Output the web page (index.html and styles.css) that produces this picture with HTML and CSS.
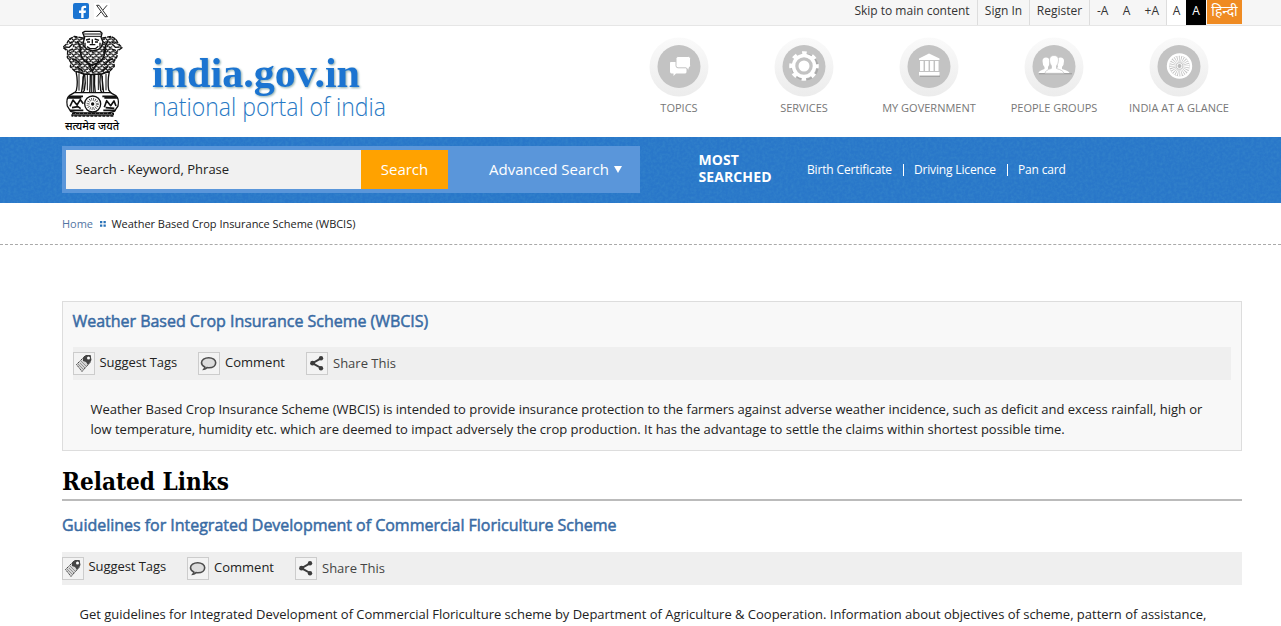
FILE: index.html
```html
<!DOCTYPE html>
<html lang="en">
<head>
<meta charset="utf-8">
<title>Weather Based Crop Insurance Scheme (WBCIS) | National Portal of India</title>
<link rel="stylesheet" href="styles.css">
</head>
<body>
<svg class="defs" width="0" height="0">
  <defs>
    <linearGradient id="ring" x1="0" y1="0" x2="0" y2="1"><stop offset="0" stop-color="#fafafa"/><stop offset="1" stop-color="#ececec"/></linearGradient>
    <pattern id="fur" width="17" height="15" patternUnits="userSpaceOnUse"><path d="M0 2q6 9 9 1M8 10q5 8 8 0M1 13l4-4M12 5l4-4M3 8l3 3M11 1v4" fill="none" stroke="#111" stroke-width="3.500"/></pattern>
    <filter id="grain" x="0" y="0" width="100%" height="100%"><feTurbulence type="fractalNoise" baseFrequency=".35" numOctaves="2" seed="4"/><feColorMatrix values="0 0 0 0 .04  0 0 0 0 .25  0 0 0 0 .6  1.800 0 0 0 -.6"/></filter>
    <symbol id="tag" viewBox="1 1 20 21"><path d="M3.500 12.500 12 4h5.500v6L9 19.500z" fill="#d5d5d5" stroke="#444" stroke-dasharray="1.500 .6"/><path d="M10 5.500 13 3h4.500l1 5-3.500 5-2-3-3-1z" fill="#444"/><path d="M5 12l6 6M7 11l5 5M8 9l6 6" stroke="#777" stroke-width=".7"/><circle cx="15.500" cy="6" r="1.500" fill="#fff"/></symbol>
    <symbol id="bubble" viewBox="1 1 20 21"><path d="M10.700 5.700c4 0 7 2.300 7 5.100s-2.700 5-6.700 5q-1 0-2-.2-1.400 1.300-3 1.500.8-1 .8-2.200C4.800 14 3.500 12.500 3.500 10.800c0-2.800 3.200-5.100 7.200-5.100z" fill="#ddd" stroke="#4d4d4d" stroke-width="1.600"/></symbol>
    <symbol id="share" viewBox="1 1 20 21"><path d="M15 6.300 6.500 11.200 15 16" fill="none" stroke="#3c3c3c" stroke-width="2"/><circle cx="15" cy="6.200" r="2.200" fill="#3c3c3c"/><circle cx="6.500" cy="11.200" r="2.400" fill="#3c3c3c"/><circle cx="15" cy="16.200" r="2.200" fill="#3c3c3c"/></symbol>
  </defs>
</svg>

<div class="topbar"><div class="wrap topbar-in">
  <div class="social">
    <svg width="16" height="16" viewBox="0 0 16 16"><rect width="16" height="16" rx="2" fill="#1b74d1"/><path d="M8.200 15V10H6V7.600h2.200V6c0-2.200 1.300-3.300 3.200-3.300h1.700v2.200h-1.300c-.8 0-1.200.4-1.200 1.200v1.500H13l-.4 2.400h-2v5z" fill="#fff"/></svg>
    <svg class="x" width="16" height="16" viewBox="0 0 16 16"><rect width="16" height="16" fill="#fff"/><path d="M2.600 2.300h2.500l8.300 11.400h-2.500zM13 2.300 8.900 7.100M7 8.900 2.700 13.700" fill="none" stroke="#333"/></svg>
  </div>
  <div class="tools">
    <a class="skip">Skip to main content</a><a class="signin">Sign In</a><a class="register">Register</a>
    <a class="sizes"><span>-A</span><span>A</span><span>+A</span></a><a class="light">A</a><a class="dark">A</a><a class="hindi">हिन्दी</a>
  </div>
</div></div>

<header class="wrap header">
  <svg class="emblem" width="75" height="106" viewBox="0 0 225 318">
    <g stroke="#111" stroke-width="4" stroke-linejoin="round">
      <path id="mane" d="M82 30 58 25 42 34 35 48 24 58 38 70 37 88 48 104 46 116 62 132 90 140 138 140 162 132 178 115 176 102 186 86 186 70 201 59 190 47 183 34 168 25 143 30z" fill="#fff" stroke-dasharray="12 3"/>
      <path d="M82 30 58 25 42 34 35 48 24 58 38 70 37 88 48 104 46 116 62 132 90 140 138 140 162 132 178 115 176 102 186 86 186 70 201 59 190 47 183 34 168 25 143 30z" fill="url(#fur)" stroke="none"/>
      <path d="M78 62q-6 22 12 38l22 12 24-12q18-16 10-38M66 40q14 12 8 34M160 40q-14 12-8 34M52 92q16 4 26 20M174 92q-16 4-26 20M94 96l18 34 20-34M66 116l18 14M158 116l-16 14" fill="none" stroke-width="4.500"/>
      <path d="M83 14 90 10h45l6 6-3 12 6 14-5 14-8 8-18 5-18-6-11-12 2-12 3-10z" fill="#fff"/>
      <path d="M86 18h53M86 25h53" stroke-width="3"/>
      <path d="M93 36l12-3M119 33l13 4M96 42h9M120 42h9M112 34v13M104 50h17M96 56l9 6h16l9-7M90 44v12M135 44v12" fill="none" stroke-width="4"/>
      <path d="M28 56l22-12 4 14-12 10zM197 56l-22-12-4 14 12 10z" fill="#fff" stroke="none"/>
      <path d="M30 57l13 1 9-9M194 57l-13 1-9-9M44 46l9-3M180 46l-9-3M42 67l12-3M183 67l-12-3" fill="none" stroke-width="4"/>
      <path d="M63 130q7 33 1 58l-7 8h22q5-34 7-58zM89 138q4 26-1 49l-7 9h23q2-30 2-57zM119 139q-2 30 2 57h21l-5-9q-4-24-1-49zM140 138q3 28 6 58h23l-8-10q-4-24 2-55z" fill="#fff"/>
      <path d="M72 136v52M97 140v47M130 140v46M153 138v49M110 140v55M115 140v55M84 145v40M142 144v42" fill="none" stroke-width="3"/>
      <path d="M44 202q-12 10-7 32l10 16 18 5h95l18-5 11-16q5-22-8-32l-15-8H58z" fill="#fff"/>
      <path d="M42 205h42M142 205h43M39 210h40M148 210h40M45 247h40M145 247h37" fill="none" stroke-width="5"/>
      <path d="M45 235l9-19 12 15 10-16 9 12M51 239l18-3 8 6M148 238l7-20 12 15 10-14 6 15M152 239l26 2" fill="none" stroke-width="5"/>
      <circle cx="113" cy="228" r="24" fill="#fff" stroke-width="4"/><circle cx="113" cy="228" r="14" fill="none" stroke="#333" stroke-width="9" stroke-dasharray="2 3.500"/><circle cx="113" cy="228" r="3"/>
      <path d="M51 256h124v8H51z" fill="#555" stroke-dasharray="9 3"/>
    </g>
    <text x="30" y="306" class="motto" textLength="162" lengthAdjust="spacingAndGlyphs">सत्यमेव जयते</text>
  </svg>
  <svg class="logo" width="250" height="90" viewBox="0 0 250 90">
    <text x="7" y="50" class="logo-main" textLength="208" lengthAdjust="spacingAndGlyphs">india.gov.in</text>
    <text x="8" y="79" class="logo-sub" textLength="233" lengthAdjust="spacingAndGlyphs">national portal of india</text>
  </svg>
  <nav class="nav">
    <a><svg viewBox="0 0 60 60"><circle cx="30" cy="30" r="29.500" fill="url(#ring)"/><circle cx="30" cy="29.500" r="21.500" fill="#c3c3c3"/><path d="M21.500 25h14q2 0 2 2v8q0 1.500-2 1.500H27l-2.500 2.500v-2.500h-2q-1.500 0-1.500-2v-8q0-1.500 .5-1.500z" fill="#fff"/><path d="M29 19.500h10.500q2 0 2 2v7q0 2-1.500 2.300v2.700l-3-2.700h-8q-2 0-2-2v-7.300q0-2 2-2z" fill="#fff" stroke="#c3c3c3" stroke-width="1"/></svg>TOPICS</a>
    <a><svg viewBox="0 0 60 60"><circle cx="30" cy="30" r="29.500" fill="url(#ring)"/><circle cx="30" cy="29.500" r="21.500" fill="#c3c3c3"/><circle cx="31" cy="30" r="12.500" fill="none" stroke="#aaa" stroke-width="2"/><circle cx="30" cy="29" r="10.500" fill="none" stroke="#fff" stroke-width="3.500"/><circle cx="30" cy="29" r="13.200" fill="none" stroke="#fff" stroke-width="3.200" stroke-dasharray="4.600 5.767" stroke-dashoffset="2.300"/><circle cx="30" cy="29" r="5.500" fill="#fff"/></svg>SERVICES</a>
    <a><svg viewBox="0 0 60 60"><circle cx="30" cy="30" r="29.500" fill="url(#ring)"/><circle cx="30" cy="29.500" r="21.500" fill="#c3c3c3"/><path d="M21 38.500h20v1.200H21z" fill="#999"/><path d="M20 21.500 30 16.500l10.500 5v1.500H20zM20 35h20.500v3.500H20z" fill="#fff"/><path d="M22.800 24v10M27.800 24v10M32.800 24v10M37.800 24v10" stroke="#fff" stroke-width="3.500"/></svg>MY GOVERNMENT</a>
    <a><svg viewBox="0 0 60 60"><circle cx="30" cy="30" r="29.500" fill="url(#ring)"/><circle cx="30" cy="29.500" r="21.500" fill="#c3c3c3"/><path d="M15 36.800h33" stroke="#999"/><path d="M14.500 36q0-2 6-4v-2q-2-2-2-6 0-3.500 3.500-3.500t3.500 3.500q0 4-1.500 6v2l4 2 4 2zM29 36l3-4 2-2q-1-3-1-6 0-3.500 3.500-3.500T40 24q0 4-2 6v2q7 2 7.500 4z" fill="#fff"/><path d="M21 36.300q0-3 6.500-5V29q-2-2.500-2-6 0-4.500 4.500-4.500t4.500 4.500q0 3.500-2 6v2.500q7 2 7.500 4.800z" fill="#fff" stroke="#c3c3c3" stroke-width=".7"/></svg>PEOPLE GROUPS</a>
    <a><svg viewBox="0 0 60 60"><circle cx="30" cy="30" r="29.500" fill="url(#ring)"/><circle cx="30" cy="29.500" r="21.500" fill="#c3c3c3"/><circle cx="30.500" cy="29" r="11.500" fill="none" stroke="#fff" stroke-width="2.400"/><circle cx="30.500" cy="29" r="6.800" fill="none" stroke="#fff" stroke-width="6.500" stroke-dasharray="1.080 .7"/><circle cx="30.500" cy="29" r="2.500" fill="#bbb" stroke="#fff"/></svg>INDIA AT A GLANCE</a>
  </nav>
</header>

<section class="band">
  <svg class="grain"><rect width="100%" height="100%" filter="url(#grain)"/></svg>
  <div class="wrap band-in">
    <form class="search"><span class="field">Search - Keyword, Phrase</span><span class="go">Search</span><span class="adv"><span class="adv-t">Advanced Search</span><i></i></span></form>
    <h2 class="most">MOST<br>SEARCHED</h2>
    <div class="popular"><a>Birth Certificate</a><b></b><a>Driving Licence</a><b></b><a>Pan card</a></div>
  </div>
</section>

<div class="crumbs"><div class="wrap crumbs-in"><a>Home</a><svg width="6" height="6"><path d="M0 0h2.300v2.300H0zM3.500 0h2.300v2.300H3.500zM0 3.500h2.300v2.300H0zM3.500 3.500h2.300v2.300H3.500z" fill="#2872b8"/></svg><span>Weather Based Crop Insurance Scheme (WBCIS)</span></div></div>

<main class="wrap">
  <article class="box">
    <h3 class="title t1">Weather Based Crop Insurance Scheme (WBCIS)</h3>
    <div class="actions"><a class="suggest"><svg><use href="#tag"/></svg><span>Suggest Tags</span></a><a class="comment"><svg><use href="#bubble"/></svg><span>Comment</span></a><a class="share"><svg><use href="#share"/></svg><span>Share This</span></a></div>
    <p>Weather Based Crop Insurance Scheme (WBCIS) is intended to provide insurance protection to the farmers against adverse weather incidence, such as deficit and excess rainfall, high or<br>low temperature, humidity etc. which are deemed to impact adversely the crop production. It has the advantage to settle the claims within shortest possible time.</p>
  </article>
  <h2 class="related"><svg width="180" height="36"><text x="0" y="26" textLength="167" lengthAdjust="spacingAndGlyphs">Related Links</text></svg></h2>
  <article class="item">
    <h3 class="title t2">Guidelines for Integrated Development of Commercial Floriculture Scheme</h3>
    <div class="actions"><a class="suggest up"><svg><use href="#tag"/></svg><span>Suggest Tags</span></a><a class="comment"><svg><use href="#bubble"/></svg><span>Comment</span></a><a class="share"><svg><use href="#share"/></svg><span>Share This</span></a></div>
    <p>Get guidelines for Integrated Development of Commercial Floriculture scheme by Department of Agriculture &amp; Cooperation. Information about objectives of scheme, pattern of assistance,</p>
  </article>
</main>
</body>
</html>
```
FILE: styles.css
```css
* { box-sizing: border-box; }
body { margin: 0; height: 626px; overflow: hidden; background: #fff; color: #222; font: 13px/20px "Open Sans", "Noto Sans", sans-serif; }
h2, h3, p { margin: 0; }
a, span, h2, h3, p { white-space: nowrap; }
.defs { position: absolute; }
.wrap { width: 1180px; margin-left: 62px; }
.topbar { height: 26px; background: #f6f6f6; border-bottom: 1px solid #e6e6e6; }
.topbar-in { display: flex; justify-content: space-between; }
.social { display: flex; gap: 5px; padding: 3px 0 0 11px; }
.tools { display: flex; height: 25px; font-size: 12px; line-height: 22px; color: #333; }
.tools a { text-align: center; border-right: 1px solid #ddd; }
.tools .skip { width: 131px; }
.tools .signin { width: 52px; }
.tools .register { width: 60px; }
.tools .sizes { width: 77px; display: flex; justify-content: space-between; padding: 0 7px; }
.tools .light { width: 19px; background: #fff; border: 0; }
.tools .dark { width: 20px; background: #000; color: #fff; border: 0; }
.tools .hindi { width: 35px; height: 24px; margin-left: 1px; background: #ef8b22; color: #fff; border: 0; font-size: 14px; }
.header { height: 111px; display: flex; }
.emblem { margin: 2px 0 0 -7px; flex: none; }
.motto { font: 500 32px "Noto Sans", sans-serif; }
.logo { margin: 11px 0 0 15px; flex: none; overflow: visible; }
.logo-main { font: 700 42px "Liberation Serif", serif; fill: #1b74d1; filter: drop-shadow(1px 1px 1px #8aa); }
.logo-sub { font: 300 25px "Open Sans", sans-serif; fill: #2879c4; }
.nav { display: flex; margin: 11px 0 0 221.500px; }
.nav a { width: 125px; flex: none; display: flex; flex-direction: column; align-items: center; font-size: 11px; line-height: 15px; color: #777; gap: 3px; }
.nav svg { width: 60px; height: 60px; }
.band { height: 66px; background: #2977c9; display: grid; overflow: hidden; }
.grain, .band-in { grid-area: 1 / 1; }
.grain { width: 100%; height: 66px; opacity: .6; }
.band-in { display: flex; color: #fff; z-index: 1; }
.search { width: 578px; height: 47px; margin-top: 9px; padding: 4px; background: #5a96da; display: flex; font-size: 15px; line-height: 38px; }
.field { width: 295px; height: 39px; background: #f1f1f1; color: #222; font-size: 13px; padding-left: 9.500px; }
.go { width: 87px; height: 39px; background: #ffa200; text-align: center; }
.adv { display: flex; padding-left: 41px; }
.adv i { border: 4px solid transparent; border-top: 7px solid #fff; border-bottom: 0; margin: 16px 0 0 5px; height: 7px; }
.most { font-size: 14px; line-height: 17px; letter-spacing: .1px; margin: 14px 0 0 58.500px; width: 108.500px; }
.popular { display: flex; font-size: 12px; line-height: 18px; letter-spacing: -.15px; padding-top: 24px; }
.popular b { width: 1px; height: 12px; margin: 3px 10px 0 11px; background: #fff; }
.crumbs { height: 42px; border-bottom: 1px dashed #aaa; }
.crumbs-in { display: flex; align-items: center; height: 42px; font-size: 11px; letter-spacing: -.03px; }
.crumbs a { color: #5376a4; }
.crumbs svg { margin: 0 5.500px 0 7px; }
main { padding-top: 56px; }
.box { height: 150px; border: 1px solid #ddd; background: #f8f8f8; padding: 8px 10px; }
.title { font-size: 16px; line-height: 22px; font-weight: 400; color: #396ba4; -webkit-text-stroke: .5px #396ba4; letter-spacing: -.02px; }
.box .title { margin-bottom: 15px; margin-left: -.5px; }
.actions { height: 33px; background: #efefef; display: flex; padding-top: 5px; line-height: 20px; }
.actions a { display: flex; height: 23px; }
.actions svg { width: 22px; height: 23px; border: 1px solid #ccc; background: #f3f3f3; margin-right: 5px; }
.suggest { width: 125px; letter-spacing: -.06px; }
.suggest svg { margin-right: 4.500px; }
.comment { width: 108px; }
.share { color: #444; }
.share span { padding-top: 1px; }
.suggest.up span { margin-top: -1px; }
.box p, .item p { margin: 19px 0 0 17.500px; letter-spacing: -.014px; }
.related { height: 50px; border-bottom: 2px solid #bbb; padding-top: 13px; }
.related text { font: 700 25px "Roboto Slab", "DejaVu Serif", serif; fill: #000; }
.related svg { display: block; }
.item .title { margin: 13px 0 16px; }
```
